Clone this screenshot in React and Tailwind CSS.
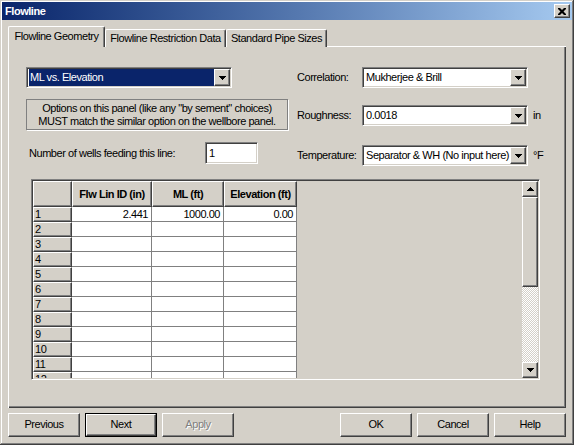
import React from 'react'

const raised = 'border border-t-white border-l-white border-r-[#404040] border-b-[#404040] shadow-[inset_-1px_-1px_0_#808080]'
const sunken = 'border border-t-[#808080] border-l-[#808080] border-r-white border-b-white shadow-[inset_1px_1px_0_#404040,inset_-1px_-1px_0_#d4d0c8]'

function ArrowDown() {
  return (
    <svg width="7" height="4" viewBox="0 0 7 4">
      <path d="M0 0h7v1h-1v1h-1v1h-1v1h-1v-1h-1v-1h-1v-1h-1z" fill="#000" />
    </svg>
  )
}

function ArrowUp() {
  return (
    <svg width="7" height="4" viewBox="0 0 7 4">
      <path d="M3 0h1v1h1v1h1v1h1v1h-7v-1h1v-1h1v-1h1z" fill="#000" />
    </svg>
  )
}

function Combo({ value, className, selected }) {
  return (
    <div className={`${sunken} ${className} h-[21px] p-[1px] flex bg-white`}>
      <div className="flex-1 flex items-center pl-[1px] overflow-hidden">
        <span className={`h-full w-full flex items-center px-[1px] whitespace-nowrap ${selected ? 'bg-[#0a246a] text-white' : 'text-black'}`}>
          {value}
        </span>
      </div>
      <div className={`${raised} w-[16px] h-full bg-[#d4d0c8] flex items-center justify-center`}>
        <ArrowDown />
      </div>
    </div>
  )
}

function Button({ label, isDefault, disabled }) {
  const inner = (
    <div className={`${raised} w-full h-full bg-[#d4d0c8] flex items-center justify-center pb-[1px] ${disabled ? 'text-[#808080] [text-shadow:1px_1px_0_#fff]' : 'text-black'}`}>
      {label}
    </div>
  )
  if (isDefault) {
    return <div className="w-[72px] h-[24px] border border-black">{inner}</div>
  }
  return <div className="w-[72px] h-[24px]">{inner}</div>
}

const rows = [
  { n: 1, id: '2.441', ml: '1000.00', el: '0.00' },
  ...Array.from({ length: 11 }, (_, i) => ({ n: i + 2, id: '', ml: '', el: '' })),
]

function Grid() {
  return (
    <div className={`${sunken} ml-[5px] w-[509px] h-[201px] p-[1px] flex bg-[#d4d0c8]`}>
      <div className="flex-1 overflow-hidden">
        <div className="flex h-[26px]">
          <div className={`${raised} w-[39px] h-full`} />
          <div className={`${raised} w-[80px] h-full flex items-center justify-center font-bold`}>Flw Lin ID (in)</div>
          <div className={`${raised} w-[72px] h-full flex items-center justify-center font-bold`}>ML (ft)</div>
          <div className={`${raised} w-[73px] h-full flex items-center justify-center font-bold`}>Elevation (ft)</div>
        </div>
        {rows.map(r => (
          <div key={r.n} className="flex h-[15px]">
            <div className={`${raised} w-[39px] h-full flex items-center pl-[1px] leading-none`}>{r.n}</div>
            <div className="w-[80px] h-full bg-white border-r border-b border-[#808080] flex items-center justify-end pr-[3px] leading-none">{r.id}</div>
            <div className="w-[72px] h-full bg-white border-r border-b border-[#808080] flex items-center justify-end pr-[3px] leading-none">{r.ml}</div>
            <div className="w-[73px] h-full bg-white border-r border-b border-[#808080] flex items-center justify-end pr-[3px] leading-none">{r.el}</div>
          </div>
        ))}
      </div>
      <div className="w-[16px] h-full flex flex-col">
        <div className={`${raised} h-[16px] bg-[#d4d0c8] flex items-center justify-center`}><ArrowUp /></div>
        <div className={`${raised} h-[90px] bg-[#d4d0c8]`} />
        <div className="flex-1 bg-[repeating-conic-gradient(#ffffff_0_25%,#d4d0c8_0_50%)] bg-[length:2px_2px]" />
        <div className={`${raised} h-[16px] bg-[#d4d0c8] flex items-center justify-center`}><ArrowDown /></div>
      </div>
    </div>
  )
}

export default function App() {
  return (
    <div className="w-[574px] h-[445px] bg-[#d4d0c8] p-[2px] shadow-[inset_-1px_-1px_0_#404040,inset_1px_1px_0_#d4d0c8,inset_-2px_-2px_0_#808080,inset_2px_2px_0_#ffffff] font-['Liberation_Sans',Arial,sans-serif] text-[11px] tracking-[-0.45px] text-black overflow-hidden">
      {/* title bar */}
      <div className="h-[18px] flex items-center justify-between bg-gradient-to-r from-[#0a246a] to-[#a6caf0] pl-[3px] pr-[2px]">
        <span className="text-white font-bold">Flowline</span>
        <div className={`${raised} w-[16px] h-[14px] bg-[#d4d0c8] flex items-center justify-center`}>
          <svg width="8" height="7" viewBox="0 0 8 7">
            <path d="M0 0h2l2 2 2-2h2v1l-2.5 2.5L8 6v1H6L4 5 2 7H0V6l2.5-2.5L0 1z" fill="#000" />
          </svg>
        </div>
      </div>

      <div className="px-[6px] mt-[6px]">
        {/* tabs */}
        <div className="flex items-end h-[21px]">
          <div className="relative z-10 w-[97px] h-[21px] bg-[#d4d0c8] border-t border-l border-white border-r border-r-[#404040] rounded-t-[2px] shadow-[inset_-1px_0_0_#808080] flex items-center justify-center pb-[2px]">
            Flowline Geometry
          </div>
          <div className="w-[121px] h-[18px] bg-[#d4d0c8] border-t border-l border-white border-r border-r-[#404040] rounded-t-[2px] shadow-[inset_-1px_0_0_#808080] flex items-center justify-center">
            Flowline Restriction Data
          </div>
          <div className="w-[101px] h-[18px] bg-[#d4d0c8] border-t border-l border-white border-r border-r-[#404040] rounded-t-[2px] shadow-[inset_-1px_0_0_#808080] flex items-center justify-center">
            Standard Pipe Sizes
          </div>
        </div>

        {/* panel */}
        <div className="-mt-px w-[558px] h-[362px] border-t border-l border-white shadow-[inset_-1px_-1px_0_#404040,inset_-2px_-2px_0_#808080] pt-[20px] pl-[17px]">
          <div className="flex gap-[9px]">
            <div className="w-[262px] flex flex-col">
              <Combo value="ML vs. Elevation" className="w-[206px]" selected />
              <div className="mt-[11px] h-[31px] border border-[#808080] shadow-[1px_1px_0_#ffffff] flex flex-col items-center justify-center leading-[13px]">
                <span>Options on this panel (like any "by sement" choices)</span>
                <span>MUST match the similar option on the wellbore panel.</span>
              </div>
              <div className="mt-[12px] flex items-center">
                <span className="ml-[3px] w-[176px]">Number of wells feeding this line:</span>
                <div className={`${sunken} w-[53px] h-[22px] bg-white px-[3px] pt-[2px]`}>1</div>
              </div>
            </div>
            <div className="flex flex-col">
              <div className="flex items-center">
                <span className="w-[65px]">Correlation:</span>
                <Combo value="Mukherjee & Brill" className="w-[166px]" />
              </div>
              <div className="flex items-center mt-[17px]">
                <span className="w-[65px]">Roughness:</span>
                <Combo value="0.0018" className="w-[166px]" />
                <span className="ml-[5px]">in</span>
              </div>
              <div className="flex items-center mt-[19px]">
                <span className="w-[65px]">Temperature:</span>
                <Combo value="Separator & WH (No input here)" className="w-[166px]" />
                <span className="ml-[5px]">°F</span>
              </div>
            </div>
          </div>
          <div className="mt-[13px]">
            <Grid />
          </div>
        </div>

        {/* buttons */}
        <div className="mt-[5px] flex justify-between w-[558px]">
          <div className="flex gap-[5px]">
            <Button label="Previous" />
            <Button label="Next" isDefault />
            <Button label="Apply" disabled />
          </div>
          <div className="flex gap-[5px]">
            <Button label="OK" />
            <Button label="Cancel" />
            <Button label="Help" />
          </div>
        </div>
      </div>
    </div>
  )
}
